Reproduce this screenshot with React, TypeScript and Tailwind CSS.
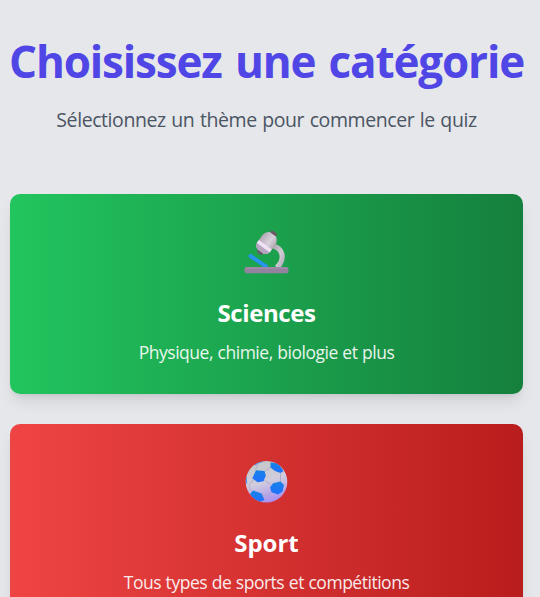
import type { ReactNode } from "react";

function Microscope() {
  return (
    <svg viewBox="0 0 76 64" className="ml-[3px] h-16 w-[76px]" aria-hidden="true">
      <defs>
        <linearGradient id="tube" x1="0" y1="0" x2="1" y2="0">
          <stop offset="0" stopColor="#b5a8b8" />
          <stop offset="0.6" stopColor="#d8d3da" />
          <stop offset="1" stopColor="#b3aab6" />
        </linearGradient>
        <linearGradient id="arm" x1="0" y1="0" x2="1" y2="1">
          <stop offset="0" stopColor="#aca4b0" />
          <stop offset="0.6" stopColor="#d0cbd3" />
          <stop offset="1" stopColor="#b5abba" />
        </linearGradient>
      </defs>
      <path d="M43 26C52 28 54.5 37 50 44L47 47.5" fill="none" stroke="url(#arm)" strokeWidth="5.2" />
      <path d="M20.5 36L36 46.3" stroke="#2794ed" strokeWidth="4" strokeLinecap="round" />
      <rect x="14.5" y="47" width="44" height="6.3" rx="2.2" fill="#9581a0" />
      <path d="M15.5 48H57.5" stroke="#a793ae" strokeWidth="1" />
      <g transform="translate(36.5 23.2) rotate(36)">
        <rect x="-3.4" y="-13.8" width="7" height="6" rx="1.5" fill="#695863" />
        <rect x="-3.2" y="7.5" width="6.4" height="5.6" rx="2" fill="#665a70" />
        <path d="M-4-11H4Q8-8 8-4V5.2Q7.6 8.8 4 10.2H-4Q-7.6 8.8-8 5.2V-4Q-8-8-4-11Z" fill="url(#tube)" />
        <path d="M-8 2H8V5.6H-8Z" fill="#efe2f5" />
        <path d="M-8 5.6H8Q7 9 4 10.2H-4Q-7 9-8 5.6Z" fill="#b7a5c2" />
      </g>
    </svg>
  );
}

function Football() {
  return (
    <svg viewBox="0 0 76 64" className="ml-[3px] h-16 w-[76px]" aria-hidden="true">
      <defs>
        <linearGradient id="ball" x1="0.3" y1="0" x2="0.6" y2="1">
          <stop offset="0" stopColor="#c5c9c8" />
          <stop offset="0.5" stopColor="#d0ccdd" />
          <stop offset="1" stopColor="#a98df0" />
        </linearGradient>
        <linearGradient id="patch" x1="0" y1="0" x2="0" y2="1">
          <stop offset="0" stopColor="#1683e6" />
          <stop offset="1" stopColor="#2070ff" />
        </linearGradient>
        <clipPath id="round">
          <circle cx="36.5" cy="31.8" r="20.8" />
        </clipPath>
      </defs>
      <circle cx="36.5" cy="31.8" r="20.8" fill="url(#ball)" />
      <g clipPath="url(#round)">
        <path
          d="M25 20.5L28 15M34.5 21L41 17M34.5 30.5L40.5 34M50.5 23L50.5 32M23 30L19 35L21 41M41.5 42L37 46L32.5 44.5"
          fill="none"
          stroke="#aaa0bd"
          strokeWidth="0.7"
        />
        <g fill="url(#patch)">
          <path d="M26 20.3L34.5 21L35.8 25.5L33.5 31.3L27.5 32.3L22.3 28.3Z" />
          <path d="M40.5 12.5L48 13L53.5 21L50.5 23L45 21L40.5 17.5Z" />
          <path d="M43 33.2L50.5 31.5L54 35L52.5 41.5L48 44.5L41.5 42.2L40 37.5Z" />
          <path d="M23 40.5L31.5 43.5L34.5 50L30 51.8L24 50L20 44Z" />
          <path d="M15 26.5L17 27L17.2 33L16 34.5H15Z" fillOpacity="0.6" />
          <path d="M24 14L31 10.5L34 11.5L29 13.2L25 15.5Z" fillOpacity="0.7" />
        </g>
      </g>
    </svg>
  );
}

interface CategoryProps {
  icon: ReactNode;
  title: string;
  description: string;
  gradient: string;
  titleTracking: string;
}

function Category({ icon, title, description, gradient, titleTracking }: CategoryProps) {
  return (
    <button
      className={`flex h-[200px] w-full shrink-0 flex-col items-center rounded-[10px] bg-linear-to-r pt-[26px] text-white shadow-[0_10px_15px_-3px_rgba(0,0,0,0.1),0_4px_6px_-4px_rgba(0,0,0,0.1)] ${gradient}`}
    >
      {icon}
      <h2 className={`mt-[13px] text-2xl leading-8 font-bold whitespace-nowrap ${titleTracking}`}>{title}</h2>
      <p className="mt-[9px] text-[17.5px] leading-7 tracking-[-0.48px] whitespace-nowrap opacity-90 [word-spacing:0.5px]">
        {description}
      </p>
    </button>
  );
}

export default function App() {
  return (
    <main className="h-[597px] overflow-hidden bg-[#e5e7eb] pr-[17px] pl-[10px] font-['Segoe_UI','Open_Sans','Noto_Sans',sans-serif]">
      <header className="flex flex-col items-center pt-[36px]">
        <h1 className="text-[44px] leading-[50px] font-bold tracking-[-1.15px] whitespace-nowrap text-[#4f46e5] [word-spacing:3px]">
          Choisissez une catégorie
        </h1>
        <p className="mt-[20px] text-[19.5px] leading-7 tracking-[-0.42px] whitespace-nowrap text-[#4b5563] [word-spacing:0.9px]">
          Sélectionnez un thème pour commencer le quiz
        </p>
      </header>
      <section className="mt-[60px] flex flex-col gap-[30px]">
        <Category
          icon={<Microscope />}
          title="Sciences"
          description="Physique, chimie, biologie et plus"
          gradient="from-[#22c55e] to-[#15803d]"
          titleTracking="tracking-[-0.4px]"
        />
        <Category
          icon={<Football />}
          title="Sport"
          description="Tous types de sports et compétitions"
          gradient="from-[#ef4444] to-[#b91c1c]"
          titleTracking="tracking-normal"
        />
      </section>
    </main>
  );
}
